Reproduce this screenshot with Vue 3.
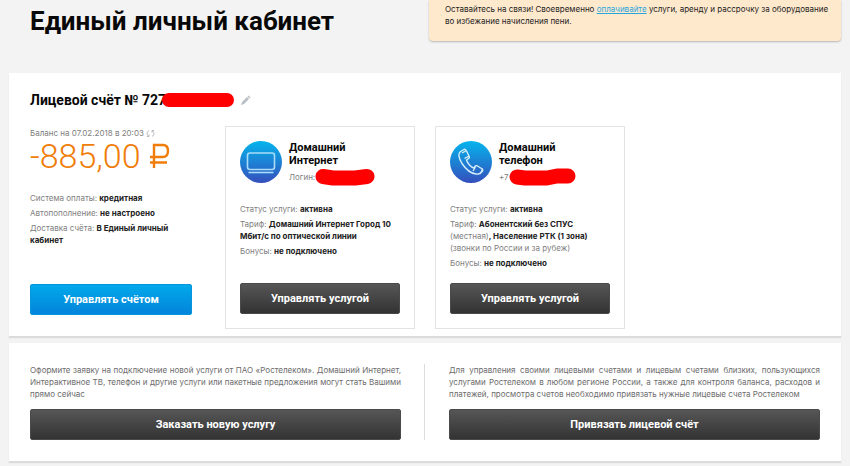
<script setup>
const services = [
  {
    id: 'internet',
    title: ['Домашний', 'Интернет'],
    idLabel: 'Логин:',
    tariff: [{ text: 'Домашний Интернет Город 10 Мбит/с по оптической линии', strong: true }],
  },
  {
    id: 'phone',
    title: ['Домашний', 'телефон'],
    idLabel: '+7',
    tariff: [
      { text: 'Абонентский без СПУС', strong: true },
      { text: ' (местная)', strong: false },
      { text: ', Население РТК (1 зона)', strong: true },
      { text: ' (звонки по России и за рубеж)', strong: false },
    ],
  },
]

const offers = [
  {
    text: 'Оформите заявку на подключение новой услуги от ПАО «Ростелеком». Домашний Интернет, Интерактивное ТВ, телефон и другие услуги или пакетные предложения могут стать Вашими прямо сейчас',
    action: 'Заказать новую услугу',
  },
  {
    text: 'Для управления своими лицевыми счетами и лицевым счетами близких, пользующихся услугами Ростелеком в любом регионе России, а также для контроля баланса, расходов и платежей, просмотра счетов необходимо привязать нужные лицевые счета Ростелеком',
    action: 'Привязать лицевой счёт',
  },
]
</script>

<template>
  <div class="page">
    <header class="top">
      <h1>Единый личный кабинет</h1>
      <p class="notice">
        Оставайтесь на связи! Своевременно <a href="#">оплачивайте</a> услуги, аренду и рассрочку за
        оборудование во избежание начисления пени.
      </p>
    </header>

    <main>
      <section class="panel account">
        <div class="account-title">
          <h2>Лицевой счёт № 727</h2>
          <svg class="mask mask-account" width="76" height="18" viewBox="0 0 76 18" aria-hidden="true">
            <path d="M9 9H67" stroke="#f00" stroke-width="14" stroke-linecap="round" />
          </svg>
          <button class="icon-button" type="button" aria-label="Изменить">
            <svg width="11" height="11" viewBox="0 0 11 11">
              <path d="M1 10l1-3 5-5 2 2-5 5zM7.500 1.500l1-1 2 2-1 1z" fill="#b9bfc4" />
            </svg>
          </button>
        </div>

        <div class="columns">
          <div class="balance">
            <div class="balance-date">
              Баланс на 07.02.2018 в 20:03
              <button class="icon-button" type="button" aria-label="Обновить">
                <svg width="9" height="9" viewBox="0 0 9 9" fill="none" stroke="#b4b8bc">
                  <path d="M3 1.500C.500 3 .500 6 3 7.500M1 7.500h2v-2M6 7.500C8.500 6 8.500 3 6 1.500M8 1.500H6v2" />
                </svg>
              </button>
            </div>
            <div class="amount">
              -885,00
              <svg width="21" height="26" viewBox="0 0 21 26" fill="none" stroke="#f07d0a" stroke-width="2.400" role="img" aria-label="руб.">
                <path d="M5 25V2h9c3 0 5 2 5 6s-2 6-5 6H1M1 19.500h17" />
              </svg>
            </div>
            <dl class="facts">
              <div><dt>Система оплаты:</dt> <dd>кредитная</dd></div>
              <div><dt>Автопополнение:</dt> <dd>не настроено</dd></div>
              <div><dt>Доставка счёта:</dt> <dd>В Единый личный кабинет</dd></div>
            </dl>
            <button class="button primary" type="button">Управлять счётом</button>
          </div>

          <article v-for="s in services" :key="s.id" class="card">
            <div class="card-head">
              <svg class="badge" width="42" height="42" viewBox="0 0 42 42" fill="none" stroke="#d5eefb" aria-hidden="true">
                <defs>
                  <linearGradient :id="`fill-${s.id}`" x1="0" y1="0" x2="0" y2="1">
                    <stop offset="0" stop-color="#04b4ec" />
                    <stop offset="1" stop-color="#354fbc" />
                  </linearGradient>
                </defs>
                <circle cx="21" cy="21" r="21" :fill="`url(#fill-${s.id})`" stroke="none" />
                <g v-if="s.id === 'internet'" stroke="#a9dcf8" stroke-width="1.600">
                  <rect x="7.500" y="12" width="27" height="16.500" rx="2.500" />
                  <path d="M8.500 31.500h25" />
                </g>
                <path
                  v-else
                  stroke-width="1.400"
                  stroke-linejoin="round"
                  d="M14 8.500l-3.500 2c-2.500 2-1.500 7 1.500 12 4 6 9 10 14 10.500 3 .5 5-1 6.500-3 .5-1 0-2-1-2.500l-4-2.500c-1-.5-2-.5-2.500.5l-1 1.500c-2.500 0-6.500-4.500-7.500-8l2-1.500c1-.5 1-1.500.5-2.500l-2.500-5c-.5-1.500-1.500-2-2.500-1.500zM12 12l4.500-2.500M14.500 17.500l4.500-2.500M25.500 26l-2.500 4M30 33l2.500-4.500"
                />
              </svg>
              <div class="card-title">
                <h3>{{ s.title[0] }}<br />{{ s.title[1] }}</h3>
                <div class="card-id">
                  {{ s.idLabel }}
                  <svg v-if="s.id === 'internet'" class="mask" width="60" height="18" viewBox="0 0 60 18" aria-hidden="true">
                    <path d="M8 8.500L18 10H40L52 8.500" fill="none" stroke="#f00" stroke-width="15" stroke-linecap="round" stroke-linejoin="round" />
                  </svg>
                  <svg v-else class="mask" width="68" height="18" viewBox="0 0 68 18" aria-hidden="true">
                    <path d="M8 9L16 10H38L48 8H59" fill="none" stroke="#f00" stroke-width="15" stroke-linecap="round" stroke-linejoin="round" />
                  </svg>
                </div>
              </div>
            </div>
            <dl class="facts">
              <div><dt>Статус услуги:</dt> <dd>активна</dd></div>
              <div>
                <dt>Тариф:</dt>&nbsp;<dd><span v-for="part in s.tariff" :key="part.text" :class="{ muted: !part.strong }">{{ part.text }}</span></dd>
              </div>
              <div><dt>Бонусы:</dt> <dd>не подключено</dd></div>
            </dl>
            <button class="button" type="button">Управлять услугой</button>
          </article>
        </div>
      </section>

      <section class="panel offers">
        <div v-for="o in offers" :key="o.action" class="offer">
          <p>{{ o.text }}</p>
          <button class="button" type="button">{{ o.action }}</button>
        </div>
      </section>
    </main>
  </div>
</template>

<style>
body {
  margin: 0;
  background: #f3f3f3;
}
</style>

<style scoped>
.page {
  padding: 0 9px 4px;
  font: 8px/12px Inter, Arial, sans-serif;
  color: #222;
}
h1, h2, h3, p, dl, dd {
  margin: 0;
}
h1, h2, h3 {
  color: #080808;
  font-family: Roboto, sans-serif;
  font-weight: 700;
}
.top {
  display: flex;
  justify-content: space-between;
  align-items: flex-start;
  padding-bottom: 32px;
}
h1 {
  padding: 5px 0 0 21px;
  font-size: 26px;
  line-height: 32px;
}
.notice {
  box-sizing: border-box;
  width: 412px;
  padding: 3px 8px 14px 16px;
  border-radius: 0 0 4px 4px;
  background: #ffe9cd;
  box-shadow: 0 1px 2px rgba(0, 0, 0, 0.25);
}
.notice a {
  color: #2ba6dc;
}
.panel {
  background: #fff;
  box-shadow: 0 2px 1px #dadcdb;
}
.account {
  padding: 18px 21px 7px;
}
.account-title {
  display: flex;
  align-items: center;
  height: 18px;
}
h2 {
  font-size: 14px;
  line-height: 18px;
}
.mask {
  flex: none;
}
.mask-account {
  margin-left: -6px;
}
.icon-button {
  display: inline-flex;
  padding: 0;
  border: 0;
  background: none;
  cursor: pointer;
}
.account-title .icon-button {
  margin-left: 4px;
}
.columns {
  display: grid;
  grid-template-columns: 175px 190px 190px;
  column-gap: 20px;
  padding-top: 17px;
}
.balance {
  display: flex;
  flex-direction: column;
  padding: 1px 13px 14px 0;
}
.balance-date {
  display: flex;
  align-items: center;
  gap: 2px;
  color: #808080;
}
.amount {
  display: flex;
  align-items: center;
  gap: 8px;
  padding-bottom: 19px;
  color: #f07d0a;
  font: 300 34px/34px Roboto, sans-serif;
}
.facts {
  display: flex;
  flex-direction: column;
  gap: 3px;
}
.facts dt,
.facts dd {
  display: inline;
}
.facts dt,
.muted {
  color: #808080;
  font-weight: 400;
}
.facts dd {
  font-weight: 700;
}
.facts .muted {
  font-weight: 400;
}
.button {
  width: 100%;
  height: 31px;
  margin-top: auto;
  padding: 0;
  border: 1px solid #4a4a4a;
  border-radius: 2px;
  background: linear-gradient(#565656, #333);
  color: #fff;
  font: 700 11px/16px Roboto, sans-serif;
  cursor: pointer;
}
.primary {
  border-color: #0795de;
  background: linear-gradient(#02a9ea, #0384db);
}
.card {
  display: flex;
  flex-direction: column;
  box-sizing: border-box;
  min-height: 203px;
  padding: 14px;
  border: 1px solid #e3e3e3;
}
.card-head {
  display: flex;
  gap: 7px;
  padding-bottom: 16px;
}
h3 {
  font-size: 11px;
  line-height: 13px;
}
.card-id {
  display: flex;
  align-items: center;
  height: 20px;
  color: #808080;
}
.offers {
  display: grid;
  grid-template-columns: 1fr 1fr;
  margin-top: 7px;
  padding: 21px 21px 21px;
}
.offer:first-child {
  padding-right: 23px;
  border-right: 1px solid #dcdcdc;
}
.offer:last-child {
  padding-left: 24px;
}
.offer p {
  padding-bottom: 9px;
  color: #6c6c6c;
  text-align: justify;
}
</style>
